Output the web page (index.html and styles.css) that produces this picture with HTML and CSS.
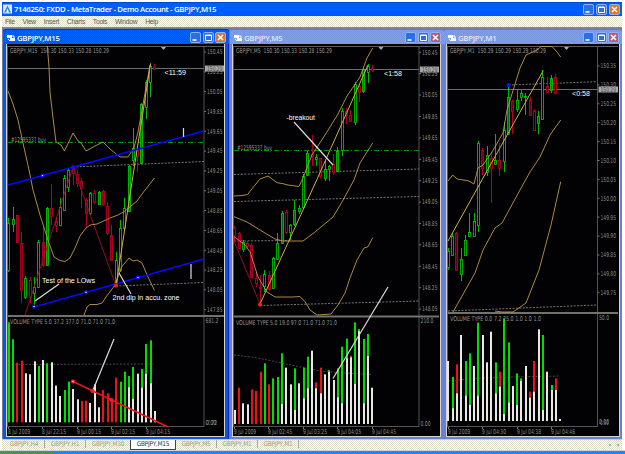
FILE: index.html
```html
<!DOCTYPE html>
<html lang="en">
<head>
<meta charset="utf-8">
<title>MetaTrader</title>
<link rel="stylesheet" href="styles.css">
</head>
<body>
<div class="app">
  <header class="titlebar">
    <svg class="app-icon" viewBox="0 0 9 9"><rect width="9" height="9" fill="#d9ecff"/><path d="M1 8L4.5 1L8 8Z" fill="#2f86c8"/><path d="M3 8L4.5 4L6 8Z" fill="#fff"/></svg>
    <span class="app-title">7146250: FXDD - MetaTrader - Demo Account - GBPJPY,M15</span>
    <span class="buttons"></span>
  </header>
  <nav class="menu"><span>File</span><span>View</span><span>Insert</span><span>Charts</span><span>Tools</span><span>Window</span><span>Help</span></nav>
  <main class="desk">
    <section class="win win-a active">
      <div class="wbar"><svg class="wicon" viewBox="0 0 8 8"><path d="M0 1h5v3H0zM3 4h5v3H3z" fill="#fff"/><path d="M1 5l2 2M5 2h2v2" stroke="#fff" fill="none"/></svg><span>GBPJPY,M15</span><span class="buttons"></span></div>
      <svg class="chart" id="m15" viewBox="7 44 217 392" preserveAspectRatio="none"></svg>
    </section>
    <section class="win win-b">
      <div class="wbar"><svg class="wicon" viewBox="0 0 8 8"><path d="M0 1h5v3H0zM3 4h5v3H3z" fill="#fff"/><path d="M1 5l2 2M5 2h2v2" stroke="#fff" fill="none"/></svg><span>GBPJPY,M5</span><span class="buttons"></span></div>
      <svg class="chart" id="m5" viewBox="233 44 207 392" preserveAspectRatio="none"></svg>
    </section>
    <section class="win win-c">
      <div class="wbar"><svg class="wicon" viewBox="0 0 8 8"><path d="M0 1h5v3H0zM3 4h5v3H3z" fill="#fff"/><path d="M1 5l2 2M5 2h2v2" stroke="#fff" fill="none"/></svg><span>GBPJPY,M1</span><span class="buttons"></span></div>
      <svg class="chart" id="m1" viewBox="447 44 172 392" preserveAspectRatio="none"></svg>
    </section>
  </main>
  <footer class="tabs"><span>GBPJPY,H4</span><span>GBPJPY,H1</span><span class="wide">GBPJPY,M30</span><span class="current">GBPJPY,M15</span><span>GBPJPY,M5</span><span>GBPJPY,M1</span><span>GBPJPY,M1</span><i class="arrows"><b>‹</b><b>›</b></i></footer>
  <div class="taskbar"><div class="start"></div></div>
</div>
<script src="charts.js"></script>
</body>
</html>
```
FILE: styles.css
```css
* { box-sizing: border-box; }
body { margin: 0; width: 625px; height: 454px; overflow: hidden; background: #fff; font-family: "DejaVu Sans Condensed", "Liberation Sans", sans-serif; }
.app { display: flex; flex-direction: column; height: 454px; padding: 2px 3px 0 2px; }
.titlebar { flex: none; display: flex; align-items: center; height: 14px; padding: 0 2px 0 1px; color: #fff; background: repeating-conic-gradient(#0060ff 0 25%, #005cf0 0 50%) 0 0 / 2px 2px; border-top: 1px solid #0048d0; border-bottom: 1px solid #0058f0; }
.app-icon { width: 9px; height: 10px; margin-right: 2px; }
.app-title { font: 600 7.8px/12px "Open Sans", sans-serif; white-space: pre; letter-spacing: -0.34px; }
.buttons { display: flex; gap: 2px; margin-left: auto; }
.buttons svg { display: block; width: 11px; height: 11px; }
.menu { flex: none; display: flex; align-items: center; gap: 7.8px; height: 11px; padding-left: 3px; font: 6.8px/11px "Liberation Sans", sans-serif; letter-spacing: -0.3px; color: #555; background: repeating-conic-gradient(#fffffa 0 25%, #e2e0cc 0 50%) 0 0 / 2px 2px; }
.desk { flex: none; display: flex; gap: 1px; height: 412px; padding: 1px 0 0 1px; background: #777a99; border-top: 1px solid #8b887c; }
.win { flex: none; display: flex; flex-direction: column; height: 410px; padding: 0 3px 2px; background: #6a7fdc; border-radius: 3px 3px 0 0; }
.win-a { width: 226px; background: #0655ea; border-right: 1px solid #0028b0; }
.win-b { width: 214px; padding-left: 2px; }
.win-c { width: 178px; margin-left: -1px; padding-left: 2px; padding-right: 2px; }
.wbar { flex: none; display: flex; align-items: center; height: 15px; padding: 1px 3px 0 4px; margin: 0 -3px; gap: 2px; color: #dfe8ff; font: 600 7.8px/14px "Open Sans", sans-serif; letter-spacing: -0.3px; background: repeating-conic-gradient(#7da2e8 0 25%, #7896e0 0 50%) 0 0 / 2px 2px; border-top: 1px solid #6a78d8; border-radius: 3px 3px 0 0; }
.win-b .wbar, .win-c .wbar { margin-left: -2px; }
.win-c .wbar { margin-right: -2px; }
.active .wbar { margin-right: -4px; color: #fff; background: repeating-conic-gradient(#0062ff 0 25%, #0054e8 0 50%) 0 0 / 2px 2px; border-top-color: #0038c8; }
.wbar .buttons { gap: 1.500px; }
.wicon { width: 8px; height: 8px; }
.chart { flex: none; display: block; width: 100%; height: 393px; background: #020103; border: solid #d8d4c4; border-width: 0 1px 1px 1px; }
.tabs { flex: none; display: flex; align-items: stretch; height: 11px; padding-left: 2px; border-top: 1px solid #d0c8c8; background: repeating-conic-gradient(#fff 0 25%, #dedbc7 0 50%) 0 0 / 2px 2px; color: #a09c8c; font: 6.5px/10px "DejaVu Sans Condensed", sans-serif; letter-spacing: -0.25px; }
.tabs span { width: 41px; text-align: center; border-right: 1px solid #aaa; line-height: 8px; height: 8px; }
.tabs span.wide { width: 44px; border: 0; }
.tabs span.current { width: 46px; height: 10px; line-height: 9px; color: #333; background: #fff; border: 1px solid #444; border-top: 0; }
.arrows { display: flex; gap: 6px; margin-left: auto; padding-right: 3px; color: #666; font-style: normal; }
.taskbar { flex: none; height: 4px; margin: 0 -3px 0 -2px; background: #1c86f4; border-top: 1px solid #cfd6e0; }
.start { width: 53px; height: 3px; background: #46945a; }
.chart text { white-space: pre; }
.axis { font: 6.6px "DejaVu Sans Condensed", sans-serif; fill: #8e8e88; }
.head { font: 6.6px "DejaVu Sans Condensed", sans-serif; fill: #96968f; }
.note { font: 7.6px "Liberation Sans", sans-serif; fill: #fff; }
.tag { fill: #a8a8a8; }
.tag-text { font: 6.4px "DejaVu Sans Condensed", sans-serif; fill: #444; }
```
FILE: charts.js
```js
const COL = { g: '#00d000', r: '#c8002c', w: '#e8e8e2', vr: '#f01018', vg: '#00e000' };
const el = (n, a) => `<${n} ${Object.entries(a).map(([k, v]) => `${k}="${v}"`).join(' ')}/>`;
const line = (p, c, w = 1, dash = '') => el('polyline', { points: p, fill: 'none', stroke: c, 'stroke-width': w, 'stroke-dasharray': dash });
const text = (x, y, s, cls, len) => `<text x="${x}" y="${y}" class="${cls}"${len ? ` textLength="${len}" lengthAdjust="spacingAndGlyphs"` : ''}>${s.replace('<', '&lt;')}</text>`;
const STEP = 4.3;

/* candle: "color wickTop bodyTop bodyBottom wickBottom", an upper case color means a solid body */
function candles(x0, list) {
  return list.trim().split(/\s*,\s*/).map((s, i) => {
    const [c, wt, bt, bb, wb] = s.split(' ');
    const x = Math.round(x0 + i * STEP - 0.5) + 0.5, col = COL[c.toLowerCase()];
    const fill = c === 'G' ? '#006a08' : c === 'R' ? '#650010' : '#020103';
    return line(`${x},${wt} ${x},${wb}`, col, 0.9) +
      el('rect', { x: x - 1, y: +bt + 0.5, width: 2, height: Math.max(0.6, bb - bt), fill, stroke: col, 'stroke-width': 0.8 });
  }).join('');
}

/* volume bar: "color height" or "color height whitePart" in thirds of a unit */
function volumes(x0, base, list) {
  return list.trim().split(/\s*,\s*/).map((s, i) => {
    const [c, h, w] = s.split(' ');
    const x = Math.round(x0 + i * STEP - 1);
    const bar = (v, f) => el('rect', { x, y: base - v / 3, width: 2, height: v / 3, fill: f });
    return bar(h, c === 'w' ? COL.w : COL['v' + c]) + (w ? bar(w, COL.w) : '');
  }).join('');
}

function draw(id, d) {
  let s = '';
  s += el('rect', { x: d.l - 0.5, y: 46.5, width: d.ax - d.l + 0.5, height: 380, fill: 'none', stroke: '#55554f' });
  s += line(`${d.l},46.5 ${d.r},46.5`, '#5c5c58');
  s += el('rect', { x: d.l, y: d.sep - 0.5, width: d.r - d.l, height: 2, fill: '#73736d' });
  s += line(`${d.l},${d.price} ${d.ax},${d.price}`, '#667074');
  if (d.order) {
    s += line(`${d.l},${d.order} ${d.ax},${d.order}`, '#009010', 1, '5 2 1 2');
    s += text(d.l + 3, d.order - 1, '#12595337 buy', 'head', 35);
  }
  d.dots.forEach(p => { s += line(p, '#85857d', 0.9, '2 1.4'); });
  s += line(d.volAvg, '#5a5a58', 0.8, '2 1.5');
  s += candles(d.x0, d.candles) + volumes(d.x0, d.base, d.vol);
  (d.red || []).forEach(p => { s += line(p, '#a01420', 0.9); });
  d.bands.forEach(p => { s += line(p, '#c0984a', 0.9); });
  s += line(d.zig, '#ccb23e', 1);
  (d.blue || []).forEach(p => { s += line(p, '#0808ff', 1.6); });
  (d.strong || []).forEach(p => { s += line(p, '#f01414', 1.6); });
  d.white.forEach(p => { s += line(p, '#deded8', 1.2); });
  (d.nodes || []).forEach(([x, y, c, hollow]) => {
    s += el('rect', { x: x - 1.5, y: y - 1.5, width: 3, height: 3, rx: 0.8, fill: c, stroke: c });
    if (hollow) s += el('rect', { x: x - 0.6, y: y - 0.6, width: 1.2, height: 1.2, fill: '#fff' });
  });
  s += text(d.l + 2, 53, d.head, 'head', d.headLen) + text(d.l + 2, d.sep + 8.6, d.volHead, 'head', d.volLen);
  d.notes.forEach(n => { s += text(n[0], n[1], n[2], 'note', n[3]); });
  for (let i = 0; i < d.count; i++) {
    const y = d.y0 + i * d.dy;
    s += line(`${d.ax},${y} ${d.ax + 2},${y}`, '#77776f') + text(d.ax + 3, y + 2.3, (d.p0 - i * d.dp).toFixed(2), 'axis', 15.5);
  }
  s += el('rect', { class: 'tag', x: d.ax + 1, y: d.price - 3, width: d.r - d.ax - 1, height: 6 }) + text(d.ax + 3, d.price + 2.3, '150.29', 'tag-text', 15.5);
  d.scale.forEach(n => { s += text(n[0], n[1], n[2], 'axis', n[3]); });
  d.times.forEach(([x, t, n]) => { s += line(`${x + 0.5},427 ${x + 0.5},429`, '#77776f') + text(x, 433.8, t, 'axis', n); });
  s += el('path', { d: `M${d.mark - 2.5} 47h5l-2.5 3z`, fill: '#a3aebc' });
  document.getElementById(id).innerHTML = s;
}

draw('m15', {
  l: 8, ax: 204, r: 224, sep: 315.5, price: 68.5, order: 142.5, x0: 8.7, base: 422.3, mark: 163.5,
  candles: 'g 218 223 270 272,g 207 219 224 232,R 215 215 242 243,r 232 243 290 303,g 276 278 297 299,r 277 280 297 303,g 277 287 293 305,g 240 242 287 288,R 227 242 265 267,G 207 208 265 265,r 184 208 216 225,r 217 222 225 232,g 198 207 225 226,g 175 178 210 211,g 168 170 187 192,r 166 168 173 185,r 170 174 183 187,r 178 181 188 208,R 198 200 213 227,g 192 193 213 215,r 190 193 201 204,G 191 192 204 205,R 190 191 204 206,r 202 206 233 235,R 225 235 260 261,g 252 260 282 285,g 220 228 270 272,g 198 208 228 230,G 165 166 211 212,g 128 148 160 166,r 148 150 156 172,G 103 104 163 164,g 80 82 107 119,g 63 66 82 97,r 64 67 69 70',
  vol: 'g 300,g 249,r 179,r 185,w 147,w 144,w 183,g 169,w 187,g 177,w 180,w 110,w 79,g 97,g 122,w 100,w 69,r 64,r 65,w 58,w 114,w 45,r 97,r 87,r 67,r 134,g 122,g 152,g 139 105,g 166 70,w 146,g 160 104,g 235 145,g 246 117,w 34',
  red: ['25,315 73,167', '73,167 116,286'],
  bands: [
    '47.3,46 49,67 50,92 53,118 56,142 61,145 64.5,151 73,133 78,141 81,143 86,151 95,146 103,142 110,149 120,157 128,157 134,148 138,132 142,110 147,82 150,65',
    '8,91 13,104 18,120 23,143 29,170 33,190 40,215 48,240 54,257 60,260.5 65,261.5 70,258 75,248 80,236 86,228 90,225 97,224 110,218 118,215 125,211 137,201 145,190 154.5,178',
    '84,315 87,307 90,304.5 97,304.5 102,303 106,297 115,285 121.5,267 129,258 133,261 137,260 142,263 148,277 154.5,290.5'],
  zig: '116,286 132.3,180 150.5,64',
  blue: ['8,185 204,131', '34,307 204,259'],
  strong: ['73,381.5 167,426.5'],
  white: ['183.5,128 183.5,137', '191,264 191,279', '59,284 35,301', '119,273 131,294', '93,390 114,339'],
  dots: ['73,167 204,161.5', '116,286 204,282.5'], volAvg: '8,364.5 155,364',
  nodes: [[42.5, 175.5, '#1010ff', 1], [73, 167, '#1010ff'], [34, 306.5, '#1010ff', 1], [86, 292.3, '#1010ff', 1], [138, 277.5, '#1010ff', 1], [116, 285.5, '#f02030'], [73, 381.5, '#f02020', 1], [92.5, 391, '#f02020'], [111.5, 400, '#f02020']],
  head: 'GBPJPY,M15  150.30 150.33 150.28 150.29', headLen: 99,
  volHead: 'VOLUME TYPE 5.0 37.2 377.0 71.0 71.0 71.0', volLen: 105,
  notes: [[164.5, 74.5, '<11:59', 21.5], [42, 282.5, 'Test of the LOws', 53], [112.5, 300.3, '2nd dip in accu. zone', 67]],
  count: 14, y0: 52, dy: 19.82, p0: 150.45, dp: 0.2,
  scale: [[205.5, 322.5, '681.2', 13], [205.5, 424.5, '0.00', 11], [205.5, 425, '-7.72', 11.5]],
  times: [[8, '8 Jul 2009', 22], [42, '8 Jul 22:15', 24], [77, '9 Jul 00:15', 24], [111, '9 Jul 02:15', 24], [146, '9 Jul 04:15', 24]]
});

draw('m5', {
  l: 234, ax: 419, r: 439, sep: 316, price: 69.5, order: 150.5, x0: 234.7, base: 424, mark: 381,
  candles: 'r 226 228 235 242,R 232 233 248 249,g 240 242 249 252,r 241 243 246 249,R 243 245 277 278,r 272 278 283 287,r 275 287 288 304,g 270 274 286 292,R 271 275 289 291,g 257 258 288 289,g 233 243 259 260,G 211 213 243 243,r 210 212 232 234,g 224 225 232 240,G 200 210 224 226,g 205 208 211 214,g 174 176 207 209,G 151 153 175 176,r 135 154 156 166,g 154 157 159 166,R 158 158 176 178,g 160 169 178 181,g 165 166 169 181,r 154 164 172 175,G 147 151 171 172,g 108 111 150 156,r 108 111 115 124,R 110 115 121 122,g 82 84 122 125,r 83 86 92 102,G 68 69 91 93,g 64 66 72 83,r 65 68 70 72',
  vol: 'w 42,r 109,w 62,w 59,r 104,r 99,r 157,g 182,r 119,g 137,g 141,g 212 60,w 169,w 119,g 167 42,w 122,g 169 77,g 202 107,w 220,r 125 107,r 169 92,w 149,g 162 156,w 132,g 167 80,g 232 62,g 256 197,r 205 200,g 305 120,g 285 278,g 255 62,g 270 204,w 109',
  red: ['234,241 260,304'],
  bands: [
    '234,196 242,195.5 247.7,194.5 251,190 260,179 268,176 277,182.7 283,183.7 288,185 299,186.5 303,178 312,155 325,135 338,114 347,96 360,77 367,58 372.7,48',
    '234,216.7 247,222 260,230 275,239 283,241 303,241 315,232 333,217 342,202 354,180 360,163 372.7,143',
    '234,236.7 245,245 250,251.7 258,277 267,292 275,297 293,297 300,296.5 305,301.7 310,310 317,315 331,314 338,305 345,293 350,278 357,260 364,248 368,246.7 372.7,237.7'],
  zig: '260,304 316.7,180 368,65',
  white: ['294,122 333,165', '333,378.5 388,287'],
  dots: ['234,174.5 419,169', '234,201.5 419,196.5', '234,241 290,240.5', '260,305.5 419,301'],
  volAvg: '234,355 258,358 280,362.7 320,371 345,373 372,374.5',
  nodes: [[260, 304.5, '#f02020']],
  head: 'GBPJPY,M5  150.30 150.33 150.28 150.29', headLen: 96,
  volHead: 'VOLUME TYPE 5.0 19.0 97.0 71.0 71.0 71.0', volLen: 101,
  notes: [[384, 76, '<1:58', 18], [286.5, 120.3, '-breakout', 28.5]],
  count: 13, y0: 52.3, dy: 21.4, p0: 150.45, dp: 0.2,
  scale: [[420.5, 322.5, '210.0', 13], [420.5, 425.5, '0.00', 10]],
  times: [[234, '9 Jul 2009', 22], [268, '9 Jul 02:45', 24], [303, '9 Jul 03:25', 24], [337, '9 Jul 04:05', 24], [372, '9 Jul 04:45', 24]]
});

draw('m1', {
  l: 448, ax: 597.5, r: 618, sep: 312.5, price: 89.5, x0: 448.3, base: 421, mark: 566.5,
  candles: 'g 248 251 267 270,g 233 236 255 256,R 232 233 270 271,g 248 259 274 281,g 235 240 255 256,g 213 232 236 237,g 213 221 236 236,g 141 143 225 232,R 148 150 168 175,g 146 155 172 176,r 152 158 168 203,g 134 160 164 165,r 143 160 168 176,g 122 130 161 172,G 85 97 134 135,R 100 101 111 134,g 89 100 109 112,g 90 93 97 101,g 93 96 97 115,R 97 100 115 116,r 109 111 130 131,G 111 116 123 134,g 70 77 119 120,r 77 86 92 93,G 75 78 90 93,r 74 77 93 94',
  vol: 'w 180,g 132 38,r 170 83,w 258,g 180 76,g 203 48,w 165,g 295 76,w 258,w 176,w 268,g 176 83,r 148 103,g 308 21,g 236 55,w 105,g 143 48,g 128 120,w 165,r 88 70,r 180 88,w 275,g 258 33,w 148,g 108 93,r 128 93,w 6',
  bands: [
    '448,181 452.7,175 457,179 468,180.7 474,184 478,168 483,165 492,152 503,133 507,110 520,68 526,55 537,50 541,46.5 552,46.5 557,52 560.7,57',
    '453,312 475,273 483,250 495,228 502,223 520,190 530,172 540,157 550,135 560.7,120',
    '495,311 502,312 513,312 526,303 539,270 551,225 560.7,181.7'],
  zig: '448,241 478,187 543.3,70.5',
  white: [],
  dots: ['448,311 597,305', '508.7,85 597,81.7'], volAvg: '448,381 482,378 490,377.5 560,376',
  nodes: [[508.5, 85, '#1010ff']],
  head: 'GBPJPY,M1  150.29 150.29 150.29 150.29', headLen: 96,
  volHead: 'VOLUME TYPE 0.0 7.2 25.0 1.0 1.0 1.0', volLen: 91,
  notes: [[572, 95.8, '<0:58', 18]],
  count: 13, y0: 66, dy: 18.9, p0: 150.35, dp: 0.05,
  scale: [[599, 319.5, '50.0', 10], [599, 423.5, '0.00', 10], [599, 425, '-0.50', 9.5]],
  times: [[448, '9 Jul 2009', 22], [482, '9 Jul 04:30', 24], [517, '9 Jul 04:38', 24], [551, '9 Jul 04:46', 24]]
});

const icon = (fill, mark) => `<svg viewBox="0 0 11 11"><rect x=".5" y=".5" width="10" height="10" rx="1.5" fill="${fill}" stroke="#8fb2f6"/>${mark}</svg>`;
document.querySelectorAll('.buttons').forEach(b => {
  const dim = b.closest('.win') && !b.closest('.active');
  b.innerHTML = icon('#2a6fe8', '<path d="M2.500 8h4" stroke="#fff" stroke-width="1.600"/>') +
    icon('#2a6fe8', '<path d="M2.500 3h6v5.500h-6zM2.500 3.500h6" fill="none" stroke="#fff"/>') +
    icon(dim ? '#b85c70' : '#d8782a', '<path d="M3 3l5 5M8 3l-5 5" stroke="#fff" stroke-width="1.500"/>');
});
```
